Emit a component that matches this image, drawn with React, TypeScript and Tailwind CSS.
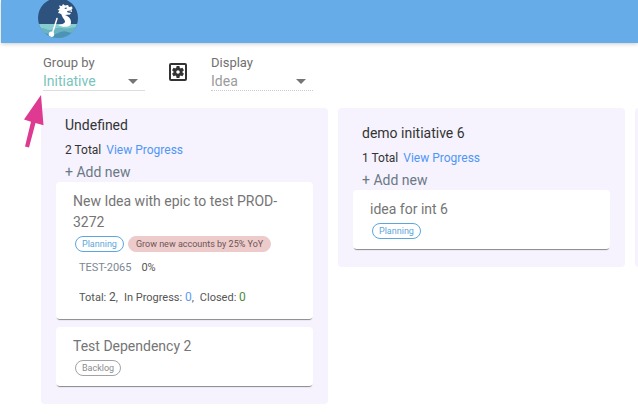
import type { ReactNode } from "react";
import clsx from "clsx";
import { MdOutlineSettingsApplications } from "react-icons/md";

type Status = "Planning" | "Backlog";

type Idea = {
  title: string;
  status: Status;
  goal?: string;
  epic?: { key: string; progress: string; total: number; inProgress: number; closed: number };
};

type Column = { name: string; ideas: Idea[]; grouped: boolean };

const columns: Column[] = [
  {
    name: "Undefined",
    grouped: false,
    ideas: [
      {
        title: "New Idea with epic to test PROD-3272",
        status: "Planning",
        goal: "Grow new accounts by 25% YoY",
        epic: { key: "TEST-2065", progress: "0%", total: 2, inProgress: 0, closed: 0 },
      },
      { title: "Test Dependency 2", status: "Backlog" },
    ],
  },
  {
    name: "demo initiative 6",
    grouped: true,
    ideas: [{ title: "idea for int 6", status: "Planning" }],
  },
];

const statusStyles: Record<Status, string> = {
  Planning: "border-[#5ba7dc] text-[#5ba7dc]",
  Backlog: "border-[#a3a3a3] text-[#8c8c8c]",
};

function Logo() {
  return (
    <svg viewBox="0 0 40 40" className="h-10 w-10" role="img" aria-label="Dragonboat">
      <defs>
        <clipPath id="disc">
          <circle cx="20" cy="20" r="20" />
        </clipPath>
      </defs>
      <g clipPath="url(#disc)">
        <path fill="#2d527e" d="M0 0h40v40H0z" />
        <path fill="#86cdd0" d="M0 26h40v14H0z" />
        <path fill="#69b3c2" d="M0 31q4-2 8 0t8 0 8-1 8 0 8-1v11H0z" />
        <path fill="#4b94b5" d="M0 36q5-2 10 0t10-1 10-1 10-2v8H0z" />
        <path
          fill="#fff"
          d="M20 15l1.500-2.500L19.500 12l2.500-2-1-2.500 3 .5 1-2 2 1.500 3-.5 1 2 3-.5.5 2-1 1 .5 2.500-3.500-.5-1 1 3.500.5-1 1.500-5 .5c3 1 6 3.500 6 7 0 1.600-.4 2.600-1 3.500-2 1.500-8 2-12-.5 4-.5 7-1.500 7-3.500 0-2-3-4-3.500-7L22 15.500z"
        />
        <path fill="#2d527e" d="M26.500 10l2-.5.5 1-2 .5zM29 13l4-.5v.8l-3.500.9z" />
        <path stroke="#fff" strokeWidth="1.500" strokeLinecap="round" d="M19 20.500L14.500 35" />
        <ellipse cx="13.500" cy="36.300" rx="2.700" ry="2.700" fill="#fff" />
      </g>
    </svg>
  );
}

type PickerProps = { id: string; label: string; options: string[]; disabled?: boolean };

function Picker({ id, label, options, disabled }: PickerProps) {
  return (
    <div className="w-[102px]">
      <label htmlFor={id} className="block text-[13px] leading-[18px] text-[#707070]">
        {label}
      </label>
      <div
        className={clsx(
          "grid items-center border-b",
          disabled ? "border-dotted border-[#ccc]" : "border-[#ddd]"
        )}
      >
        <select
          id={id}
          disabled={disabled}
          className={clsx(
            "col-start-1 row-start-1 w-full appearance-none bg-transparent text-[14px] leading-[18px] opacity-100 outline-none",
            disabled ? "text-[#9b9b9b]" : "text-[#79c4bc]"
          )}
        >
          {options.map((o) => (
            <option key={o}>{o}</option>
          ))}
        </select>
        <svg
          viewBox="0 0 10 5"
          className="pointer-events-none col-start-1 row-start-1 mr-[7px] h-[5px] w-[10px] justify-self-end"
          fill="#757575"
          aria-hidden="true"
        >
          <path d="M0 0h10L5 5z" />
        </svg>
      </div>
    </div>
  );
}

function Chip({ className, children }: { className: string; children: ReactNode }) {
  return (
    <span className={clsx("h-4 rounded-full border text-[9px] leading-[14px]", className)}>
      {children}
    </span>
  );
}

function IdeaCard({ idea }: { idea: Idea }) {
  const { epic } = idea;
  return (
    <article className="rounded bg-white px-[17px] pt-[9px] pb-[10px] shadow-[0_2px_1px_-1px_#888]">
      <h3 className="text-[14px] leading-[21px] text-[#757575]">{idea.title}</h3>
      <div className="mt-[3px] ml-[2px] flex gap-1">
        <Chip className={clsx("px-[6px]", statusStyles[idea.status])}>{idea.status}</Chip>
        {idea.goal && (
          <Chip className="border-[#edcbcb] bg-[#edcbcb] px-[7px] text-[#6b5555]">{idea.goal}</Chip>
        )}
      </div>
      {epic && (
        <div className="ml-[6px] pb-[3px] text-[11px] leading-4 text-[#555]">
          <p className="mt-2 flex gap-[10px]">
            <a href="#epic" className="text-[#7b8794]">
              {epic.key}
            </a>
            <span>{epic.progress}</span>
          </p>
          <p className="mt-[13px] flex gap-[6px]">
            <span>
              Total: <span className="text-[12px]">{epic.total}</span>,
            </span>
            <span>
              In Progress: <span className="text-[12px] text-[#5b9cf0]">{epic.inProgress}</span>,
            </span>
            <span>
              Closed: <span className="text-[12px] text-[#4b8b3b]">{epic.closed}</span>
            </span>
          </p>
        </div>
      )}
    </article>
  );
}

function BoardColumn({ column }: { column: Column }) {
  return (
    <section
      className={clsx(
        "w-[287px] shrink-0 rounded bg-[#f6f3fe] px-[15px] pb-[18px]",
        column.grouped ? "pt-4" : "pt-2"
      )}
    >
      <header className="px-[9px]">
        <h2 className="text-[14px] leading-[18px] text-[#333]">{column.name}</h2>
        <p className="mt-2 flex gap-[5px] text-[12px] leading-4 text-[#333]">
          {column.ideas.length} Total
          <a href="#progress" className="text-[#4f96f6]">
            View Progress
          </a>
        </p>
        <button type="button" className="mt-1 block text-[14px] leading-5 text-[#6b7885]">
          + Add new
        </button>
      </header>
      <div className="flex flex-col gap-2">
        {column.ideas.map((idea) => (
          <IdeaCard key={idea.title} idea={idea} />
        ))}
      </div>
    </section>
  );
}

export default function App() {
  return (
    <div className="relative min-h-screen overflow-hidden bg-white font-['Roboto',sans-serif]">
      <header className="ml-px h-[43px] bg-[#66ace8] pl-[37px] shadow-[0_1px_4px_#ccc]">
        <a href="#home" className="-mt-[2px] inline-block">
          <Logo />
        </a>
      </header>

      <div className="flex items-start gap-[21px] px-[43px] pt-[11px]">
        <Picker id="group-by" label="Group by" options={["Initiative", "Goal", "Status"]} />
        <button type="button" aria-label="Board settings" className="mt-[6px]">
          <MdOutlineSettingsApplications className="h-6 w-6 text-[#333]" />
        </button>
        <Picker id="display" label="Display" options={["Idea"]} disabled />
      </div>

      <main className="mt-[17px] flex items-start gap-[10px] pb-3 pl-[41px]">
        {columns.map((column) => (
          <BoardColumn key={column.name} column={column} />
        ))}
        <section className="h-[159px] w-[287px] shrink-0 rounded bg-[#f6f3fe]" />
      </main>

      <svg
        viewBox="0 0 20 53"
        className="pointer-events-none absolute top-[95px] left-6 h-[53px] w-5"
        fill="#de3a91"
        aria-hidden="true"
      >
        <path d="M17 0L0 24.500l7 2.200L1 51.500l4 1L11.500 28l8 2.200z" />
      </svg>
    </div>
  );
}
